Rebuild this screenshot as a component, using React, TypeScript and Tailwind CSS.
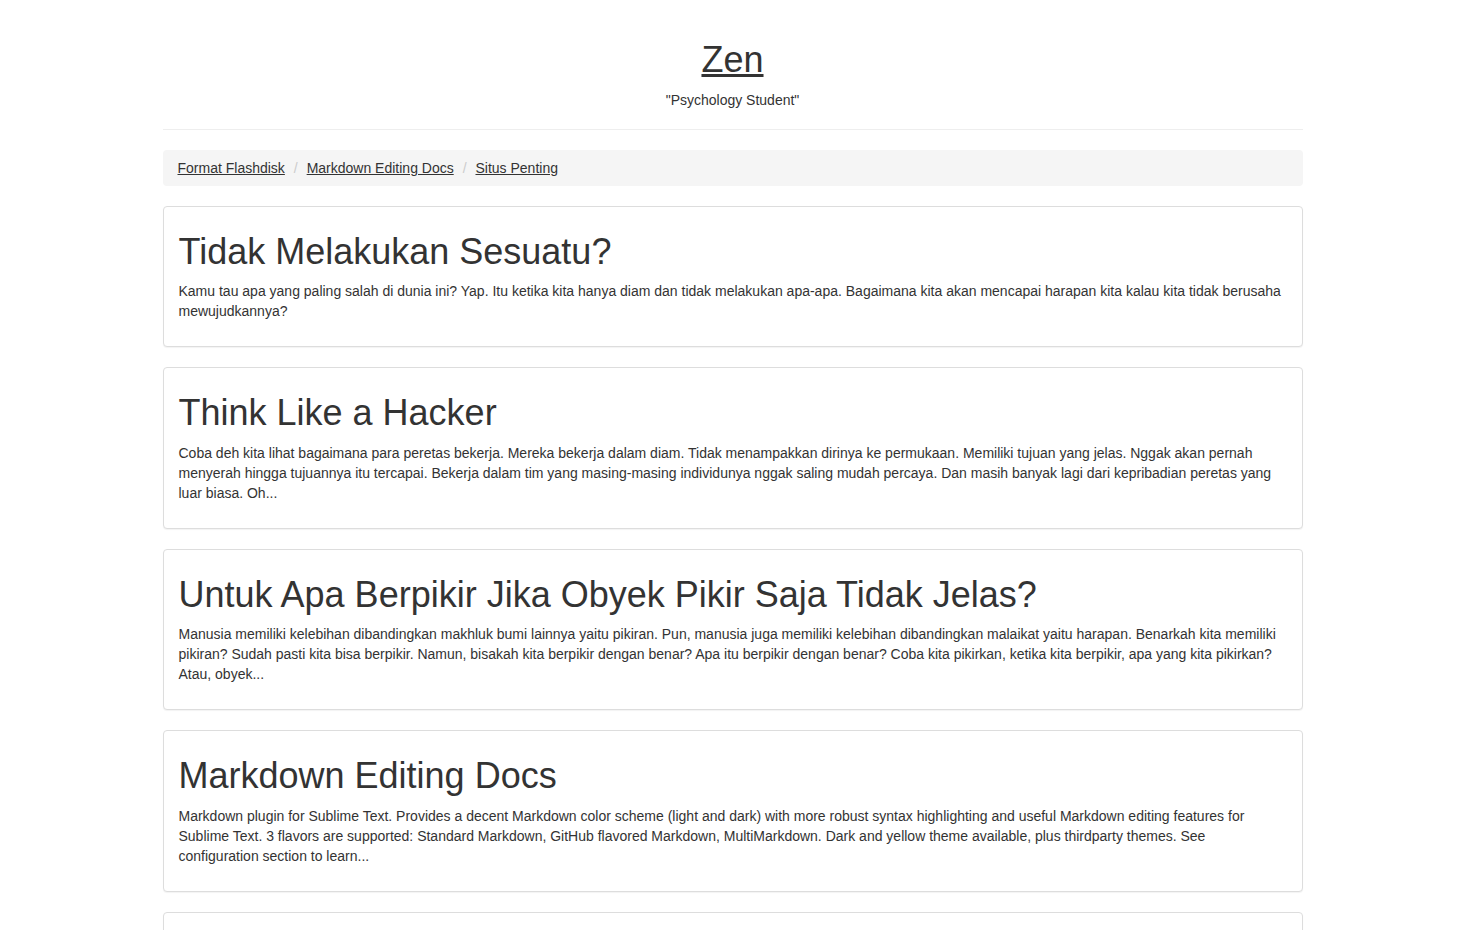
import React from "react";

const posts = [
  {
    title: "Tidak Melakukan Sesuatu?",
    body: "Kamu tau apa yang paling salah di dunia ini? Yap. Itu ketika kita hanya diam dan tidak melakukan apa-apa. Bagaimana kita akan mencapai harapan kita kalau kita tidak berusaha mewujudkannya?",
  },
  {
    title: "Think Like a Hacker",
    body: "Coba deh kita lihat bagaimana para peretas bekerja. Mereka bekerja dalam diam. Tidak menampakkan dirinya ke permukaan. Memiliki tujuan yang jelas. Nggak akan pernah menyerah hingga tujuannya itu tercapai. Bekerja dalam tim yang masing-masing individunya nggak saling mudah percaya. Dan masih banyak lagi dari kepribadian peretas yang luar biasa. Oh...",
  },
  {
    title: "Untuk Apa Berpikir Jika Obyek Pikir Saja Tidak Jelas?",
    body: "Manusia memiliki kelebihan dibandingkan makhluk bumi lainnya yaitu pikiran. Pun, manusia juga memiliki kelebihan dibandingkan malaikat yaitu harapan. Benarkah kita memiliki pikiran? Sudah pasti kita bisa berpikir. Namun, bisakah kita berpikir dengan benar? Apa itu berpikir dengan benar? Coba kita pikirkan, ketika kita berpikir, apa yang kita pikirkan? Atau, obyek...",
  },
  {
    title: "Markdown Editing Docs",
    body: "Markdown plugin for Sublime Text. Provides a decent Markdown color scheme (light and dark) with more robust syntax highlighting and useful Markdown editing features for Sublime Text. 3 flavors are supported: Standard Markdown, GitHub flavored Markdown, MultiMarkdown. Dark and yellow theme available, plus thirdparty themes. See configuration section to learn...",
  },
  {
    title: "Format Flashdisk",
    body: "Cara memformat flashdisk yang tidak bisa diformat dengan cara biasa. Gunakan command prompt dan diskpart untuk membersihkan partisi flashdisk kamu...",
  },
];

export default function App() {
  return (
    <div
      className="min-h-screen bg-white text-[#333] text-[14px] leading-[20px]"
      style={{ fontFamily: '"Liberation Sans", Arial, sans-serif' }}
    >
      <div className="mx-auto w-[1140px] pt-[40px]">
        <header className="text-center">
          <h1 className="text-[36px] leading-[39.6px] font-normal">
            <a href="#" className="underline text-[#333]">
              Zen
            </a>
          </h1>
          <p className="mt-[10px]">"Psychology Student"</p>
        </header>
        <hr className="mt-[19px] mb-[20px] border-0 border-t border-[#eee]" />
        <ol className="flex items-center h-[36px] px-[15px] bg-[#f5f5f5] rounded-[4px] mb-[20px]">
          {["Format Flashdisk", "Markdown Editing Docs", "Situs Penting"].map(
            (l, i) => (
              <li key={l} className="flex items-center">
                {i > 0 && (
                  <span className="ml-[4px] px-[5px] text-[#ccc] whitespace-pre">
                    {"/\u00a0"}
                  </span>
                )}
                <a href="#" className="underline text-[#333]">
                  {l}
                </a>
              </li>
            )
          )}
        </ol>
        <div className="flex flex-col gap-[20px]">
          {posts.map((p) => (
            <div
              key={p.title}
              className="border border-[#ddd] rounded-[4px] bg-white shadow-[0_1px_1px_rgba(0,0,0,0.05)] px-[15px] pt-[25px] pb-[25px]"
            >
              <h1 className="text-[36px] leading-[39.6px] font-normal mb-[10px]">
                {p.title}
              </h1>
              <p>{p.body}</p>
            </div>
          ))}
        </div>
        <div className="h-[20px]" />
      </div>
    </div>
  );
}
